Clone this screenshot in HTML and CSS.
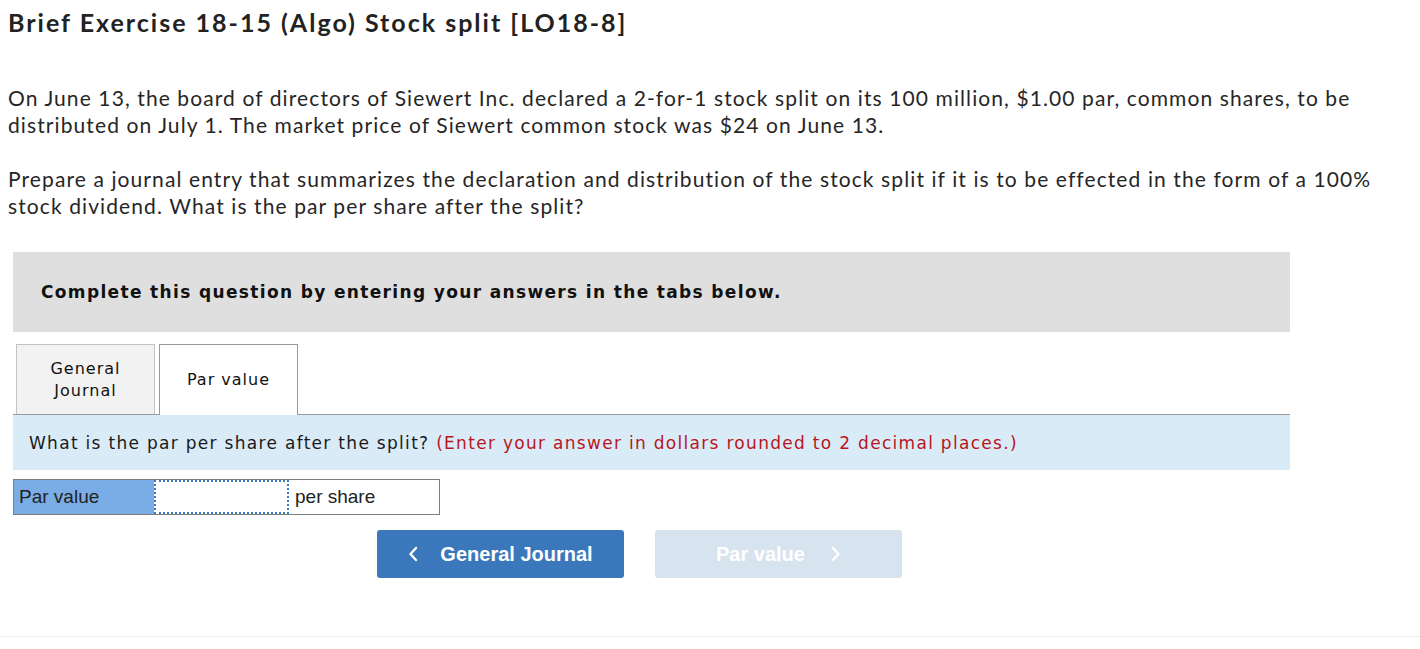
FILE: index.html
```html
<!DOCTYPE html>
<html>
<head>
<meta charset="utf-8">
<link rel="stylesheet" href="styles.css">
</head>
<body>
<div class="page">
  <h1 class="title">Brief Exercise 18-15 (Algo) Stock split [LO18-8]</h1>
  <p class="para first">On June 13, the board of directors of Siewert Inc. declared a 2-for-1 stock split on its 100 million, $1.00 par, common shares, to be distributed on July 1. The market price of Siewert common stock was $24 on June 13.</p>
  <p class="para">Prepare a journal entry that summarizes the declaration and distribution of the stock split if it is to be effected in the form of a 100% stock dividend. What is the par per share after the split?</p>

  <div class="panel">
    <div class="banner">Complete this question by entering your answers in the tabs below.</div>
    <div class="tabs">
      <div class="tab inactive">General<br>Journal</div>
      <div class="tab active">Par value</div>
    </div>
    <div class="instruction">What is the par per share after the split? <span class="note">(Enter your answer in dollars rounded to 2 decimal places.)</span></div>
    <div class="answer">
      <div class="label">Par value</div>
      <div class="input"></div>
      <div class="unit">per share</div>
    </div>
    <div class="nav">
      <button class="btn prev"><svg class="chev" viewBox="0 0 10 16" width="10" height="16"><path d="M8 2 L2.5 8 L8 14" fill="none" stroke="#fff" stroke-width="2.4" stroke-linecap="round" stroke-linejoin="round"/></svg><span>General Journal</span></button>
      <button class="btn next"><span>Par value</span><svg class="chev" viewBox="0 0 10 16" width="10" height="16"><path d="M2 2 L7.5 8 L2 14" fill="none" stroke="#fff" stroke-width="2.4" stroke-linecap="round" stroke-linejoin="round"/></svg></button>
    </div>
  </div>
</div>
<div class="footer">
  <span class="tick"></span><span class="tick"></span><span class="tick"></span><span class="tick"></span>
</div>
</body>
</html>
```

FILE: styles.css
```css
html, body {
  margin: 0;
  padding: 0;
  background: #fff;
}
body {
  font-family: Lato, "Open Sans", sans-serif;
  color: #262626;
}
.page {
  padding: 0 8px;
  height: 636px;
  box-sizing: border-box;
}
.title {
  margin: 0;
  padding-top: 7px;
  font-size: 25px;
  line-height: 30px;
  font-weight: 700;
  letter-spacing: 2px;
  color: #222;
}
.para {
  margin: 27px 0 0;
  font-size: 21px;
  letter-spacing: 1.1px;
  line-height: 27px;
  color: #262626;
  width: 1395px;
}
.para.first {
  margin-top: 47px;
}
.panel {
  margin: 33px 0 0 5px;
  width: 1277px;
}
.banner {
  background: #dfdfdf;
  height: 80px;
  box-sizing: border-box;
  padding: 0 28px;
  display: flex;
  align-items: center;
  font-family: "DejaVu Sans", Verdana, sans-serif;
  font-weight: 700;
  font-size: 17px;
  letter-spacing: 1.35px;
  color: #111;
}
.tabs {
  display: flex;
  gap: 4px;
  margin-top: 12px;
  padding-left: 3px;
  border-bottom: 1px solid #999;
  height: 70px;
}
.tab {
  width: 139px;
  box-sizing: border-box;
  display: flex;
  align-items: center;
  justify-content: center;
  text-align: center;
  font-family: "DejaVu Sans", Verdana, sans-serif;
  font-size: 16px;
  letter-spacing: 1px;
  line-height: 22px;
  color: #111;
}
.tab.inactive {
  background: #f2f2f2;
  border: 1px solid #c3c3c3;
  border-bottom: none;
  height: 70px;
}
.tab.active {
  background: #fff;
  border: 1px solid #999;
  border-bottom: none;
  height: 71px;
  position: relative;
  z-index: 1;
}
.instruction {
  background: #daebf8;
  height: 55px;
  box-sizing: border-box;
  display: flex;
  align-items: center;
  padding-left: 16px;
  font-family: "DejaVu Sans", Verdana, sans-serif;
  font-size: 17px;
  letter-spacing: 1.3px;
  color: #1a1a1a;
  white-space: pre;
}
.note {
  color: #b8161c;
}
.answer {
  display: flex;
  margin-top: 9px;
  width: 427px;
  height: 36px;
  border: 1px solid #7f7f7f;
  box-sizing: border-box;
  font-family: "Liberation Sans", Arial, sans-serif;
  font-size: 19px;
  color: #222;
}
.label {
  width: 140px;
  background: #7aade5;
  padding-left: 5px;
  box-sizing: border-box;
  display: flex;
  align-items: center;
}
.input {
  width: 135px;
  border: 2px dotted #3d79c5;
  box-sizing: border-box;
  background: #fff;
}
.unit {
  flex: 1;
  display: flex;
  align-items: center;
  padding-left: 6px;
}
.nav {
  display: flex;
  gap: 31px;
  margin: 15px 0 0 364px;
}
.btn {
  width: 247px;
  height: 48px;
  border: none;
  border-radius: 3px;
  display: flex;
  align-items: center;
  justify-content: center;
  gap: 22px;
  font-family: "Liberation Sans", Arial, sans-serif;
  font-weight: 700;
  font-size: 20px;
  color: #fff;
  padding: 0;
}
.btn.prev {
  background: #3a77bb;
}
.btn.next {
  background: #d8e3f0;
  gap: 26px;
}
.chev {
  display: block;
}
.footer {
  border-top: 1px solid #eeeeee;
  height: 12px;
}
.tick {
  display: inline-block;
  width: 1px;
  height: 6px;
  background: #ececec;
  margin-top: 6px;
}
.tick:nth-child(1) { margin-left: 445px; }
.tick:nth-child(2) { margin-left: 145px; }
.tick:nth-child(3) { margin-left: 202px; }
.tick:nth-child(4) { margin-left: 145px; }
```
